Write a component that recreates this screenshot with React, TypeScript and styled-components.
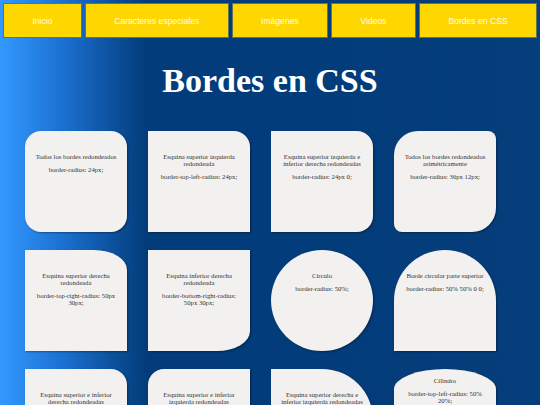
import React from "react";
import styled, { createGlobalStyle } from "styled-components";

// --- Estilos globales ---
const GlobalStyle = createGlobalStyle`
  html, body {
    margin: 0;
    padding: 0;
  }

  body {
    min-height: 405px;
    background: linear-gradient(to right, #3399ff 0%, #1a6fcf 12%, #033c7a 27%, #033c7a 60%, #063e7c 100%);
    font-family: "Liberation Serif", "Times New Roman", serif;
  }
`;

// --- Menu ---
const Nav = styled.nav`
  display: flex;
  gap: 3px;
  padding: 3px 3px 0;
`;

const NavItem = styled.a`
  flex: 1 1 auto;
  height: 35px;
  display: flex;
  align-items: center;
  justify-content: center;
  box-sizing: border-box;
  background-color: #ffd700;
  border: 1px solid #63744f;
  color: #fffbe6;
  font-family: "Liberation Sans", Arial, sans-serif;
  font-size: 8.6px;
  text-decoration: none;
  white-space: nowrap;
`;

// --- Titulo ---
const Title = styled.h1`
  margin: 23px 0 31px;
  text-align: center;
  color: #ffffff;
  font-family: "Liberation Serif", "Times New Roman", serif;
  font-size: 34px;
  font-weight: 700;
  line-height: 39px;
`;

// --- Tarjetas ---
const Grid = styled.section`
  display: grid;
  grid-template-columns: repeat(4, 102px);
  grid-auto-rows: 101px;
  column-gap: 21px;
  row-gap: 18px;
  padding-left: 25px;
`;

const Card = styled.div<{ $radius: string; $padTop?: number }>`
  box-sizing: border-box;
  background-color: #f2f1f0;
  border-radius: ${(p) => p.$radius};
  box-shadow: 1px 1px 2px rgba(0, 0, 0, 0.35);
  padding: ${(p) => p.$padTop ?? 15}px 8px 0;
  overflow: hidden;
  text-align: center;
  color: #333;
  font-family: "Liberation Serif", "Times New Roman", serif;
  font-size: 6.7px;

  p {
    margin: 1em 0;
  }
`;

const cards = [
  { label: "Todos los bordes redondeados", code: ["border-radius: 24px;"], radius: "16px" },
  { label: "Esquina superior izquierda redondeada", code: ["border-top-left-radius: 24px;"], radius: "0 16px 0 0" },
  { label: "Esquina superior izquierda e inferior derecha redondeadas", code: ["border-radius: 24px 0;"], radius: "0 16px 16px 0" },
  { label: "Todos los bordes redondeados asimétricamente", code: ["border-radius: 36px 12px;"], radius: "24px 8px" },
  { label: "Esquina superior derecha redondeada", code: ["border-top-right-radius: 50px 30px;"], radius: "0 33px 0 0 / 0 20px 0 0" },
  { label: "Esquina inferior derecha redondeada", code: ["border-bottom-right-radius: 50px 30px;"], radius: "0 0 33px 0 / 0 0 20px 0" },
  { label: "Círculo", code: ["border-radius: 50%;"], radius: "50%" },
  { label: "Borde circular parte superior", code: ["border-radius: 50% 50% 0 0;"], radius: "50% 50% 0 0" },
  { label: "Esquina superior e inferior derecha redondeadas", code: ["border-radius: 0 24px 24px 0;"], radius: "0 16px 16px 0" },
  { label: "Esquina superior e inferior izquierda redondeadas", code: ["border-radius: 24px 0 0 24px;"], radius: "16px 0 0 16px" },
  { label: "Esquina superior derecha e inferior izquierda redondeadas", code: ["border-radius: 0 50%;"], radius: "0 50%" },
  {
    label: "Cilindro",
    code: ["border-top-left-radius: 50% 20%;", "border-top-right-radius: 50% 20%;"],
    radius: "50% / 20%",
    padTop: 1,
  },
];

const App = () => {
  return (
    <>
      <GlobalStyle />
      <Nav>
        <NavItem href="#">Inicio</NavItem>
        <NavItem href="#">Caracteres especiales</NavItem>
        <NavItem href="#">Imágenes</NavItem>
        <NavItem href="#">Videos</NavItem>
        <NavItem href="#">Bordes en CSS</NavItem>
      </Nav>
      <Title>Bordes en CSS</Title>
      <Grid>
        {cards.map((c) => (
          <Card key={c.label} $radius={c.radius} $padTop={c.padTop}>
            <p>{c.label}</p>
            {c.code.map((line) => (
              <p key={line}>{line}</p>
            ))}
          </Card>
        ))}
      </Grid>
    </>
  );
};

export default App;
